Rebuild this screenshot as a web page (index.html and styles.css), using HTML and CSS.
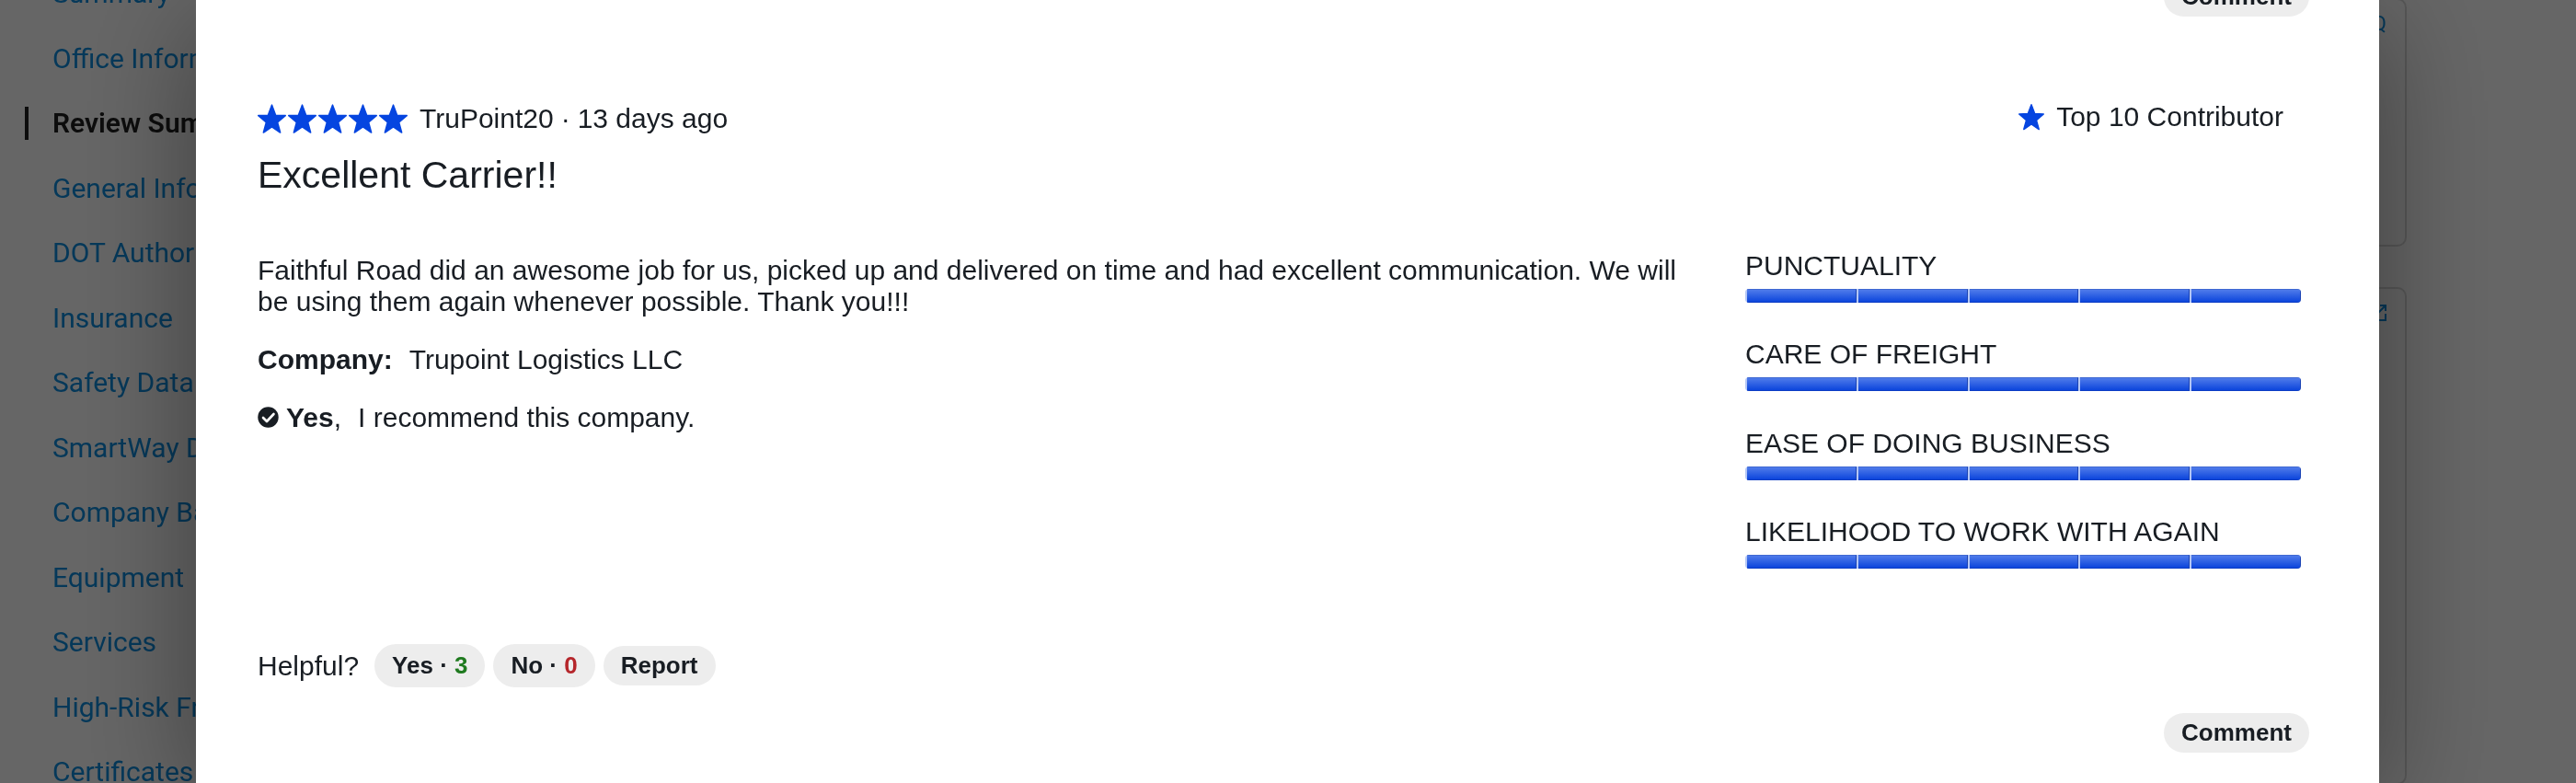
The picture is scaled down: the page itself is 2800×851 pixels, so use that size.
FILE: index.html
```html
<!DOCTYPE html>
<html lang="en">
<head>
    <meta charset="UTF-8">
    <meta name="viewport" content="width=device-width, initial-scale=1.0">
    <title>Carrier Reviews</title>
    <link rel="stylesheet" href="styles.css">
</head>
<body>
    <svg class="sprite" aria-hidden="true">
        <symbol id="star" viewBox="0 0 31 32">
            <path d="M15.5 1.2 L19.6 12.2 L30.2 12.6 L21.6 20 L24.6 31 L15.5 24.8 L6.4 31 L9.4 20 L.8 12.6 L11.4 12.2 Z" fill="#0545e0" stroke="#0545e0" stroke-width="1.6" stroke-linejoin="round"/>
        </symbol>
    </svg>

    <div class="page">
        <nav class="side-nav">
            <a href="#">Summary</a>
            <a href="#">Office Information</a>
            <a href="#" class="active">Review Summary</a>
            <a href="#">General Information</a>
            <a href="#">DOT Authority</a>
            <a href="#">Insurance</a>
            <a href="#">Safety Data</a>
            <a href="#">SmartWay Data</a>
            <a href="#">Company Background</a>
            <a href="#">Equipment</a>
            <a href="#">Services</a>
            <a href="#">High-Risk Freight</a>
            <a href="#">Certificates</a>
        </nav>
        <div class="cards">
            <section class="card card-first"><a href="#">FAQ</a></section>
            <section class="card card-last">
                <a href="#" aria-label="Open">
                    <svg width="18" height="18" viewBox="0 0 18 18" fill="none" stroke="currentColor" stroke-width="2"><path d="M7 1H1v16h16v-7M11 1h6v6M17 1L8 10"/></svg>
                </a>
            </section>
        </div>
    </div>

    <div class="overlay">
        <main class="modal" role="dialog" aria-label="Reviews">
            <div class="review-footer previous">
                <button class="pill">Comment</button>
            </div>

            <article class="review">
                <header class="review-header">
                    <div class="stars" role="img" aria-label="5 out of 5 stars">
                        <svg><use href="#star"/></svg>
                        <svg><use href="#star"/></svg>
                        <svg><use href="#star"/></svg>
                        <svg><use href="#star"/></svg>
                        <svg><use href="#star"/></svg>
                    </div>
                    <span class="author">TruPoint20</span>
                    <span class="dot">·</span>
                    <span class="date">13 days ago</span>
                    <div class="contributor">
                        <svg><use href="#star"/></svg>
                        <span>Top 10 Contributor</span>
                    </div>
                </header>
                <h2 class="review-title">Excellent Carrier!!</h2>

                <div class="review-content">
                    <div class="review-text">
                        <p>Faithful Road did an awesome job for us, picked up and delivered on time and had excellent communication. We will be using them again whenever possible. Thank you!!!</p>
                        <p class="detail"><b>Company:</b><span>Trupoint Logistics LLC</span></p>
                        <p class="detail">
                            <svg class="check" viewBox="0 0 23 23"><circle cx="11.5" cy="11.5" r="11.2" fill="#181d23"/><path d="M6 12l4 4 7.5-8" fill="none" stroke="#fff" stroke-width="2.6" stroke-linecap="round" stroke-linejoin="round"/></svg>
                            <span class="yes"><b>Yes</b>,</span>
                            <span>I recommend this company.</span>
                        </p>
                    </div>

                    <div class="ratings">
                        <div class="rating">
                            <div class="rating-label">PUNCTUALITY</div>
                            <div class="bar"><i></i><i></i><i></i><i></i><i></i></div>
                        </div>
                        <div class="rating">
                            <div class="rating-label">CARE OF FREIGHT</div>
                            <div class="bar"><i></i><i></i><i></i><i></i><i></i></div>
                        </div>
                        <div class="rating">
                            <div class="rating-label">EASE OF DOING BUSINESS</div>
                            <div class="bar"><i></i><i></i><i></i><i></i><i></i></div>
                        </div>
                        <div class="rating">
                            <div class="rating-label">LIKELIHOOD TO WORK WITH AGAIN</div>
                            <div class="bar"><i></i><i></i><i></i><i></i><i></i></div>
                        </div>
                    </div>
                </div>

                <div class="helpful">
                    <span class="helpful-label">Helpful?</span>
                    <button class="pill vote">Yes · <span class="up">3</span></button>
                    <button class="pill vote">No · <span class="down">0</span></button>
                    <button class="pill">Report</button>
                </div>
                <div class="review-footer">
                    <button class="pill">Comment</button>
                </div>
            </article>
        </main>
    </div>
</body>
</html>
```
FILE: styles.css
```css
* {
    box-sizing: border-box;
}

body {
    margin: 0;
    height: 100vh;
    overflow: hidden;
    background-color: white;
    color: #181d23;
    font-family: "Liberation Sans", Arial, Helvetica, sans-serif;
    font-size: 30px;
    line-height: 34px;
}

h2, p {
    margin: 0;
}

.sprite {
    position: absolute;
    width: 0;
    height: 0;
}

/* page behind the dialog */
.page {
    position: fixed;
    inset: 0;
    display: flex;
    justify-content: space-between;
    overflow: hidden;
    font-family: Roboto, sans-serif;
}

.page a {
    color: #0f8ee0;
    text-decoration: none;
    white-space: nowrap;
}

.side-nav {
    display: flex;
    flex-direction: column;
    justify-content: space-between;
    width: 400px;
    margin: -25px 0 -6px 27px;
    line-height: 36px;
}

.side-nav a {
    padding-left: 30px;
}

.side-nav .active {
    padding-left: 26px;
    border-left: 4px solid #222;
    color: #222;
    font-weight: 600;
}

.cards {
    display: flex;
    flex-direction: column;
    gap: 44px;
    width: 400px;
    margin: -2px 184px -2px 0;
    font-size: 22px;
}

.card {
    display: flex;
    justify-content: flex-end;
    padding: 9px 20px;
    border: 2px solid #ddd;
    border-radius: 10px;
}

.card svg {
    display: block;
    margin-top: 8px;
}

.card-first {
    height: 270px;
}

.card-last {
    flex: 1;
}

/* dialog */
.overlay {
    position: fixed;
    inset: 0;
    padding: 0 214px 0 213px;
    background-color: rgba(0, 0, 0, 0.6);
}

.modal {
    height: 100%;
    padding: 0 76px 0 67px;
    overflow: hidden;
    background-color: white;
    box-shadow: 0 22px 120px rgba(0, 0, 0, 0.4);
}

.previous {
    margin-top: -25px;
    margin-bottom: 94px;
}

.review-header {
    display: flex;
    align-items: flex-start;
}

.stars {
    display: flex;
    gap: 2px;
    padding-top: 1px;
    margin-right: 13px;
}

.stars svg {
    width: 31px;
    height: 32px;
}

.dot {
    margin: 0 8px;
}

.contributor {
    display: flex;
    gap: 13px;
    margin-left: auto;
    margin-right: 28px;
    line-height: 30px;
}

.contributor svg {
    width: 28px;
    height: 30px;
}

.review-title {
    margin-top: 20px;
    font-size: 41px;
    font-weight: normal;
    line-height: 48px;
}

.review-content {
    display: grid;
    grid-template-columns: 1fr 604px;
    gap: 60px;
    margin: 58px 9px 82px 0;
}

.review-text {
    display: flex;
    flex-direction: column;
    gap: 29px;
    padding-top: 5px;
}

.detail {
    display: flex;
    gap: 18px;
}

.check {
    width: 23px;
    height: 23px;
    margin: 5px -10px 0 0;
}

.ratings {
    display: flex;
    flex-direction: column;
    justify-content: space-between;
    min-height: 346px;
}

.bar {
    display: flex;
    gap: 2px;
    height: 15px;
    margin-top: 8px;
    padding-left: 2px;
    overflow: hidden;
    border-radius: 4px;
    background-color: #b4c7f6;
}

.bar i {
    flex: 1;
    background: linear-gradient(#4f7bea, #0c45dc);
    border-top: 1px solid #3f68d2;
    border-right: 1px solid #1c44b4;
    border-bottom: 1px solid #0d3dc4;
}

.helpful {
    display: flex;
    align-items: center;
    gap: 9px;
    margin-bottom: 28px;
}

.helpful-label {
    margin-right: 8px;
}

.pill {
    height: 43px;
    padding: 0 19px;
    border: none;
    border-radius: 24px;
    background-color: #ededed;
    color: #181d23;
    font-family: inherit;
    font-size: 26px;
    font-weight: bold;
    cursor: pointer;
}

.vote {
    height: 47px;
}

.up {
    color: #1f7a1f;
}

.down {
    color: #b5262b;
}

.review-footer {
    display: flex;
    justify-content: flex-end;
}
```
